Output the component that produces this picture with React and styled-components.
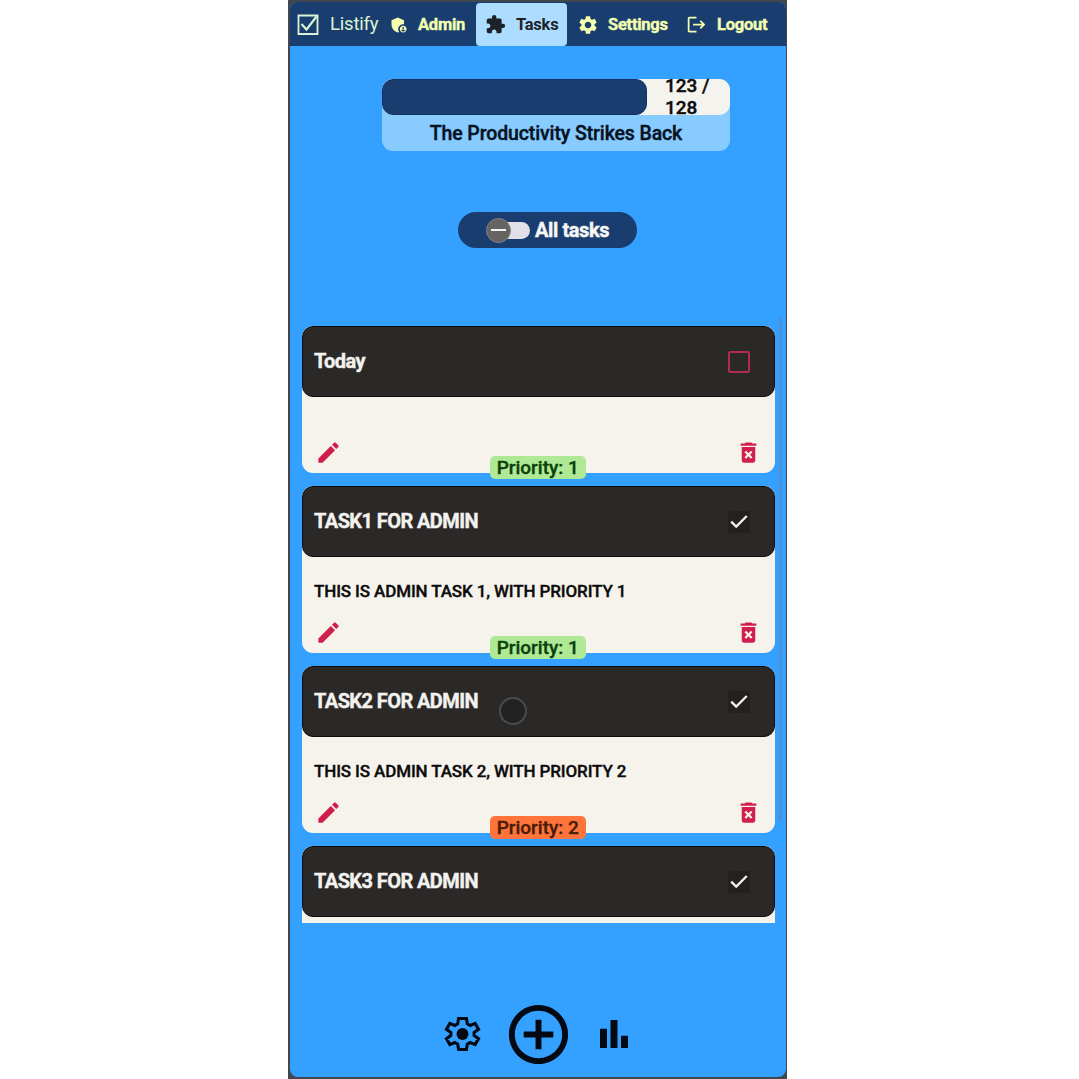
import React from "react";
import styled, { createGlobalStyle } from "styled-components";
import {
  MdAdminPanelSettings, MdExtension, MdSettings, MdLogout, MdEdit,
  MdDeleteForever, MdAddCircleOutline, MdBarChart,
} from "react-icons/md";

const GlobalStyle = createGlobalStyle`
  * { box-sizing: border-box; }
  body { margin: 0; background: #fff; font-family: Roboto, "Liberation Sans", sans-serif; overflow: hidden; }
  svg { display: block; flex: none; }
  button { font: inherit; background: none; border: 0; padding: 0; color: inherit; }
`;

const Device = styled.div`
  width: 499px;
  height: 1079px;
  margin-left: 288px;
  padding: 2px 1px 2px 2px;
  background: #42474e;
`;

const Screen = styled.main`
  position: relative;
  height: 1075px;
  display: flex;
  flex-direction: column;
  align-items: center;
  background: #34a0ff;
  border-radius: 8px;
  overflow: hidden;
`;

const NavBar = styled.nav`
  width: 100%;
  height: 44px;
  flex: none;
  display: flex;
  align-items: center;
  background: #1a3d70;
  color: #f4ffb0;
`;

const Brand = styled.div`
  display: flex;
  align-items: center;
  gap: 11px;
  width: 97px;
  padding-left: 7px;
  color: #dcf5d0;
  font-size: 18.5px;
  letter-spacing: -0.2px;
`;

const Tab = styled.a`
  display: flex;
  align-items: center;
  gap: ${(p) => p.$gap || 10}px;
  width: ${(p) => p.$width}px;
  height: 43px;
  padding: 1px 0 0 ${(p) => p.$pad || 9}px;
  border-radius: 4px;
  font-size: 16.5px;
  font-weight: 700;
  letter-spacing: -0.25px;
  white-space: nowrap;
  background: ${(p) => (p.$active ? "#acdcff" : "transparent")};
  color: ${(p) => (p.$active ? "#1d2228" : "inherit")};
  -webkit-text-stroke: ${(p) => (p.$active ? "0" : "0.4px")} currentColor;
`;

const Progress = styled.section`
  width: 348px;
  height: 72px;
  flex: none;
  margin: 33px 0 0 36px;
  border-radius: 11px;
  background: #87cbff;
`;

const Track = styled.div`
  display: flex;
  align-items: center;
  height: 36px;
  border-radius: 11px;
  background: #f5f3ed;
`;

const Fill = styled.div`
  width: 265px;
  height: 36px;
  border: 1px solid #123264;
  border-radius: 11px;
  background: #1a3d70;
`;

const Count = styled.div`
  width: 60px;
  margin: 0 0 0 18px;
  font-size: 19px;
  line-height: 22px;
  font-weight: 500;
  color: #0b0b0e;
  -webkit-text-stroke: 0.4px currentColor;
`;

const Rank = styled.div`
  font-size: 19.5px;
  line-height: 37px;
  font-weight: 500;
  letter-spacing: -0.12px;
  text-align: center;
  color: #07121f;
  -webkit-text-stroke: 0.4px currentColor;
`;

const Filter = styled.button`
  display: flex;
  align-items: center;
  gap: 5px;
  width: 179px;
  height: 36px;
  flex: none;
  margin: 61px 0 0 19px;
  padding-left: 28px;
  border-radius: 18px;
  background: #1a3d70;
  color: #f7f7f4;
  font-size: 20px;
  font-weight: 700;
  letter-spacing: -0.4px;
  -webkit-text-stroke: 0.4px currentColor;
`;

const Switch = styled.span`
  display: flex;
  align-items: center;
  width: 44px;
  height: 17px;
  border-radius: 9px;
  background: linear-gradient(90deg, transparent 12px, #e2dfe8 12px);
`;

const Knob = styled.span`
  display: grid;
  place-items: center;
  width: 25px;
  height: 25px;
  flex: none;
  border-radius: 50%;
  border: 1px solid #83807c;
  background: #666463;
  &::after { content: ""; width: 15px; height: 2px; background: #f3f3f3; }
`;

const ListArea = styled.section`
  width: 100%;
  height: 605px;
  flex: none;
  margin-top: 70px;
  padding: 8px 4px 0 12px;
  display: flex;
  align-items: flex-start;
  justify-content: space-between;
  overflow: hidden;
`;

const Cards = styled.div`
  width: 472.5px;
  display: flex;
  flex-direction: column;
  gap: 12.6px;
`;

const Scrollbar = styled.div`
  width: 3px;
  height: 504px;
  margin-top: -8px;
  background: #4b92d8;
`;

const Card = styled.article`
  display: flex;
  flex-direction: column;
  height: ${(p) => (p.$empty ? 147.4 : 167.4)}px;
  border-radius: 11px;
  background: #f6f3ed;
`;

const CardHead = styled.header`
  display: flex;
  align-items: center;
  justify-content: space-between;
  height: 71.4px;
  flex: none;
  padding: 0 24px 1px 11px;
  border: 1px solid #0e0d0c;
  border-radius: 11px;
  background: #2a2928;
  color: #f4f2ee;
  font-size: 20px;
  font-weight: 700;
  letter-spacing: -0.58px;
  -webkit-text-stroke: 0.4px currentColor;
`;

const Check = styled.span`
  display: grid;
  place-items: center;
  width: 22px;
  height: 22px;
  margin-top: 1px;
  border-radius: 2px;
  border: ${(p) => (p.$done ? "0" : "2px solid #b22a4c")};
  background: ${(p) => (p.$done ? "#222120" : "transparent")};
`;

const Description = styled.p`
  flex: 1;
  margin: 0;
  padding: 23px 12px 0;
  font-size: 17px;
  line-height: 22px;
  font-weight: 500;
  letter-spacing: -0.13px;
  color: #0c0b0b;
  -webkit-text-stroke: 0.35px currentColor;
`;

const CardFoot = styled.footer`
  display: flex;
  align-items: flex-end;
  justify-content: space-between;
  height: 36px;
  flex: none;
  padding: 0 13px;
  color: #d11f4d;
`;

const IconButton = styled.button`
  align-self: flex-start;
  margin-top: 2px;
`;

const Priority = styled.span`
  width: 96px;
  height: 23px;
  margin: 0 1px -6px 0;
  border-radius: 5px;
  text-align: center;
  font-size: 19px;
  line-height: 24px;
  font-weight: 500;
  -webkit-text-stroke: 0.35px currentColor;
  background: ${(p) => (p.$level === 1 ? "#afe995" : "#ff743a")};
  color: ${(p) => (p.$level === 1 ? "#0b410b" : "#4a1c08")};
`;

const Actions = styled.footer`
  display: flex;
  align-items: center;
  gap: 19.5px;
  margin: 75.5px 0 0 1px;
  color: #030a14;
`;

const Pointer = styled.div`
  position: absolute;
  left: 209px;
  top: 694.5px;
  width: 28px;
  height: 28px;
  border: 2px solid #4b4a4e;
  border-radius: 50%;
  background: #222223;
`;

const BrandMark = () => (
  <svg width="22" height="22" viewBox="0 0 22 22" fill="none" stroke="currentColor" strokeWidth="1.8">
    <path d="M1.5 2.5H20.5V21H1.5Z" />
    <path d="M4.5 11L9.5 16.5L19.5 3.5" strokeWidth="2.1" />
  </svg>
);

const Tick = () => (
  <svg width="22" height="22" viewBox="0 0 22 22" fill="none" stroke="currentColor" strokeWidth="2.3">
    <path d="M3.2 10.6L8.2 15.6L18.8 5" />
  </svg>
);

const GearDot = () => (
  <svg width="41" height="42" viewBox="0 0 24 24" fill="none" stroke="currentColor" strokeWidth="1.8" strokeLinejoin="miter">
    <path d="M9.7 2.9H14.3L14.8 6L16.5 7L19.4 5.8L21.4 9.3L18.8 11.1V12.9L21.4 14.7L19.4 18.2L16.5 17L14.8 18L14.3 21.1H9.7L9.2 18L7.5 17L4.6 18.2L2.6 14.7L5.2 12.9V11.1L2.6 9.3L4.6 5.8L7.5 7L9.2 6Z" />
    <circle cx="12" cy="12" r="3.5" fill="currentColor" stroke="none" />
  </svg>
);

const tasks = [
  { title: "Today", text: "", priority: 1, done: false },
  { title: "TASK1 FOR ADMIN", text: "THIS IS ADMIN TASK 1, WITH PRIORITY 1", priority: 1, done: true },
  { title: "TASK2 FOR ADMIN", text: "THIS IS ADMIN TASK 2, WITH PRIORITY 2", priority: 2, done: true },
  { title: "TASK3 FOR ADMIN", text: "", priority: 3, done: true, cut: true },
];

const TaskCard = ({ task }) => (
  <Card $empty={!task.text}>
    <CardHead>
      {task.title}
      <Check $done={task.done}>{task.done && <Tick />}</Check>
    </CardHead>
    {!task.cut && (
      <>
        <Description>{task.text}</Description>
        <CardFoot>
          <IconButton aria-label="Edit"><MdEdit size={27} /></IconButton>
          <Priority $level={task.priority}>Priority: {task.priority}</Priority>
          <IconButton aria-label="Delete"><MdDeleteForever size={27} /></IconButton>
        </CardFoot>
      </>
    )}
  </Card>
);

export default function App() {
  return (
    <>
      <GlobalStyle />
      <Device>
        <Screen>
          <NavBar>
            <Brand><BrandMark />Listify</Brand>
            <Tab $width={89} $pad={2} $gap={9}><MdAdminPanelSettings size={20} />Admin</Tab>
            <Tab $width={91} $active><MdExtension size={21} />Tasks</Tab>
            <Tab $width={109} $pad={10} $gap={9}><MdSettings size={22} />Settings</Tab>
            <Tab $width={110} $pad={10}><MdLogout size={21} />Logout</Tab>
          </NavBar>
          <Progress>
            <Track>
              <Fill />
              <Count>123 / 128</Count>
            </Track>
            <Rank>The Productivity Strikes Back</Rank>
          </Progress>
          <Filter><Switch><Knob /></Switch>All tasks</Filter>
          <ListArea>
            <Cards>{tasks.map((t) => <TaskCard key={t.title} task={t} />)}</Cards>
            <Scrollbar />
          </ListArea>
          <Actions>
            <GearDot />
            <MdAddCircleOutline size={71} />
            <MdBarChart size={42} />
          </Actions>
          <Pointer />
        </Screen>
      </Device>
    </>
  );
}
